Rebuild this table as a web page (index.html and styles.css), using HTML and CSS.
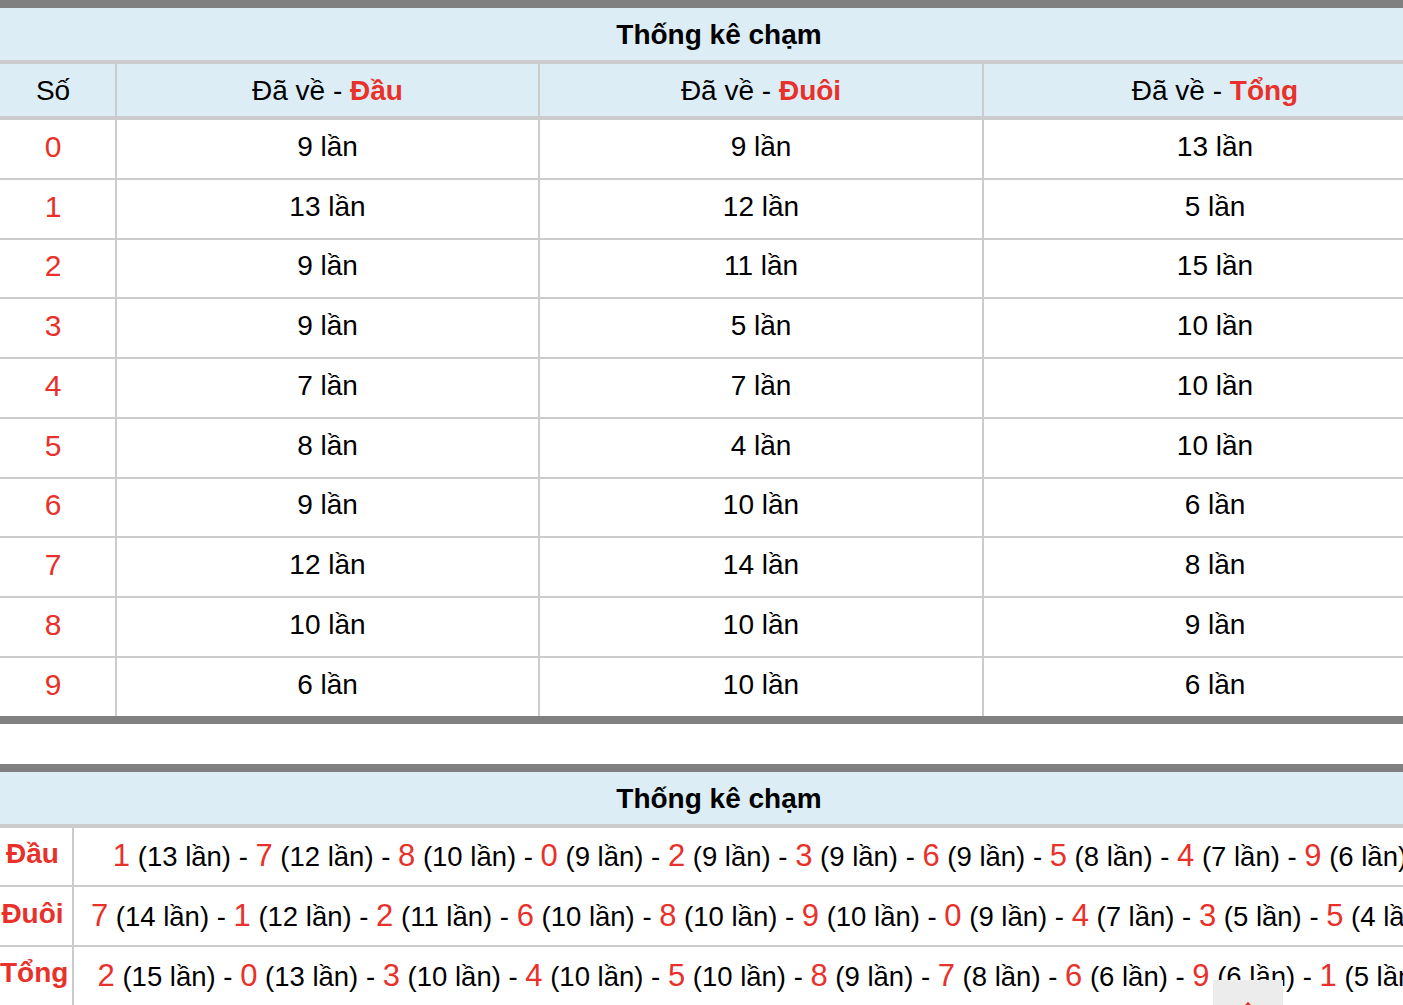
FILE: index.html
```html
<!DOCTYPE html>
<html lang="vi">
<head>
<meta charset="utf-8">
<title>Thống kê chạm</title>
<link rel="stylesheet" href="styles.css">
</head>
<body>
<div class="page">
  <section class="stat">
    <div class="stat-title">Thống kê chạm</div>
    <div class="grid grid-main">
      <div class="cell head first">Số</div>
      <div class="cell head">Đã về -&nbsp;<b class="red">Đầu</b></div>
      <div class="cell head">Đã về -&nbsp;<b class="red">Đuôi</b></div>
      <div class="cell head">Đã về -&nbsp;<b class="red">Tổng</b></div>

      <div class="cell num">0</div><div class="cell">9 lần</div><div class="cell">9 lần</div><div class="cell">13 lần</div>
      <div class="cell num">1</div><div class="cell">13 lần</div><div class="cell">12 lần</div><div class="cell">5 lần</div>
      <div class="cell num">2</div><div class="cell">9 lần</div><div class="cell">11 lần</div><div class="cell">15 lần</div>
      <div class="cell num">3</div><div class="cell">9 lần</div><div class="cell">5 lần</div><div class="cell">10 lần</div>
      <div class="cell num">4</div><div class="cell">7 lần</div><div class="cell">7 lần</div><div class="cell">10 lần</div>
      <div class="cell num">5</div><div class="cell">8 lần</div><div class="cell">4 lần</div><div class="cell">10 lần</div>
      <div class="cell num">6</div><div class="cell">9 lần</div><div class="cell">10 lần</div><div class="cell">6 lần</div>
      <div class="cell num">7</div><div class="cell">12 lần</div><div class="cell">14 lần</div><div class="cell">8 lần</div>
      <div class="cell num">8</div><div class="cell">10 lần</div><div class="cell">10 lần</div><div class="cell">9 lần</div>
      <div class="cell num">9</div><div class="cell">6 lần</div><div class="cell">10 lần</div><div class="cell">6 lần</div>
    </div>
  </section>

  <section class="stat stat-second">
    <div class="stat-title">Thống kê chạm</div>
    <div class="grid grid-summary">
      <div class="cell label"><span class="label-text">Đầu</span></div>
      <div class="cell seq"><span class="seq-text"><span class="n">1</span> (13 lần) - <span class="n">7</span> (12 lần) - <span class="n">8</span> (10 lần) - <span class="n">0</span> (9 lần) - <span class="n">2</span> (9 lần) - <span class="n">3</span> (9 lần) - <span class="n">6</span> (9 lần) - <span class="n">5</span> (8 lần) - <span class="n">4</span> (7 lần) - <span class="n">9</span> (6 lần)</span></div>
      <div class="cell label"><span class="label-text">Đuôi</span></div>
      <div class="cell seq"><span class="seq-text"><span class="n">7</span> (14 lần) - <span class="n">1</span> (12 lần) - <span class="n">2</span> (11 lần) - <span class="n">6</span> (10 lần) - <span class="n">8</span> (10 lần) - <span class="n">9</span> (10 lần) - <span class="n">0</span> (9 lần) - <span class="n">4</span> (7 lần) - <span class="n">3</span> (5 lần) - <span class="n">5</span> (4 lần)</span></div>
      <div class="cell label"><span class="label-text">Tổng</span></div>
      <div class="cell seq"><span class="seq-text"><span class="n">2</span> (15 lần) - <span class="n">0</span> (13 lần) - <span class="n">3</span> (10 lần) - <span class="n">4</span> (10 lần) - <span class="n">5</span> (10 lần) - <span class="n">8</span> (9 lần) - <span class="n">7</span> (8 lần) - <span class="n">6</span> (6 lần) - <span class="n">9</span> (6 lần) - <span class="n">1</span> (5 lần)</span></div>
    </div>
  </section>
</div>

<a class="to-top" href="#" aria-label="Lên đầu trang">
  <svg width="20" height="14" viewBox="0 0 20 14"><path d="M3 12 L10 4 L17 12" fill="none" stroke="#e8312a" stroke-width="3"/></svg>
</a>
</body>
</html>
```

FILE: styles.css
```css
html, body {
  margin: 0;
  padding: 0;
  background: #fff;
  overflow: hidden;
}

body {
  font-family: "Liberation Sans", Arial, Helvetica, sans-serif;
  color: #000;
}

.page {
  width: 1446px;
}

.stat {
  border-top: 8px solid #808080;
  border-bottom: 8px solid #808080;
}

.stat-second {
  margin-top: 40px;
}

.stat-title {
  height: 52px;
  background: #dcedf5;
  border-bottom: 4px solid #cccccc;
  display: flex;
  align-items: center;
  justify-content: center;
  padding-right: 8px;
  padding-top: 2px;
  box-sizing: content-box;
  height: 50px;
  font-size: 28px;
  font-weight: bold;
}

.grid {
  display: grid;
  gap: 2px;
  background: #cccccc;
}

.grid-main {
  grid-template-columns: 115px 421px 442px 462px;
  grid-template-rows: 54px;
  grid-auto-rows: 57.75px;
}

.grid-summary {
  grid-template-columns: 72px 1372px;
  grid-auto-rows: 57.75px;
}

.cell {
  background: #fff;
  display: flex;
  align-items: center;
  justify-content: center;
  font-size: 28px;
  white-space: nowrap;
  padding-bottom: 4px;
}

.head {
  background: #dcedf5;
  margin-bottom: 2px;
  padding-bottom: 0;
  padding-top: 1px;
}

.first,
.num {
  padding-right: 9px;
}

.red {
  color: #e8312a;
  font-weight: bold;
}

.num {
  color: #e8312a;
  font-size: 30px;
}

.label {
  justify-content: flex-start;
  padding-right: 7px;
  padding-bottom: 5px;
}

.label-text {
  display: block;
  width: 100%;
  text-align: center;
  color: #e8312a;
  font-weight: bold;
  font-size: 28px;
}

.seq {
  font-size: 27.5px;
  padding-bottom: 0;
}

.seq-text {
  display: block;
}

.n {
  color: #e8312a;
  font-size: 31px;
}

.to-top {
  position: fixed;
  left: 1213px;
  top: 980px;
  width: 70px;
  height: 60px;
  background: #ececec;
  display: flex;
  justify-content: center;
  align-items: flex-start;
  padding-top: 20px;
  box-sizing: border-box;
}
```
